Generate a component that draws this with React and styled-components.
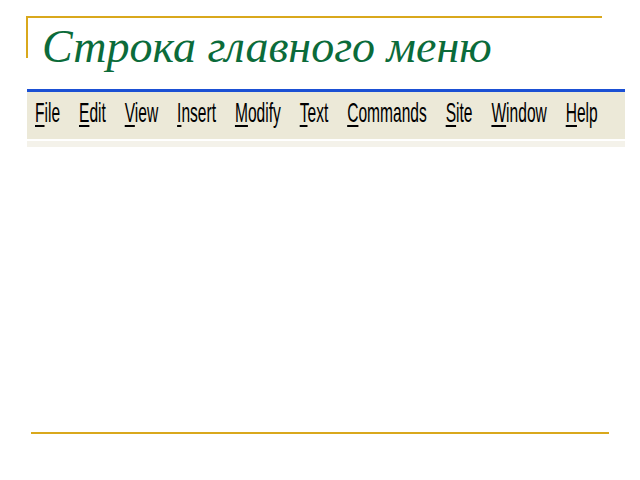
import React from 'react';
import styled, { createGlobalStyle } from 'styled-components';

const GlobalStyle = createGlobalStyle`
  html, body {
    margin: 0;
    padding: 0;
    background: #ffffff;
  }
  body {
    font-family: "Liberation Sans", Arial, sans-serif;
  }
`;

const Slide = styled.div`
  width: 640px;
  height: 480px;
  display: flex;
  flex-direction: column;
  overflow: hidden;
`;

const HeaderFrame = styled.div`
  box-sizing: border-box;
  margin: 16px 0 0 26px;
  width: 576px;
  height: 42px;
  border-top: 2px solid #d9a81c;
  border-left: 2px solid #d9a81c;
  padding: 6px 0 0 14px;
`;

const Title = styled.h1`
  margin: 0;
  font-family: "Liberation Serif", "Times New Roman", serif;
  font-style: italic;
  font-weight: normal;
  font-size: 46px;
  line-height: 46px;
  color: #0b6b3a;
  white-space: nowrap;
`;

const MenuShot = styled.div`
  margin: 31px 0 0 27px;
  width: 598px;
  display: flex;
  flex-direction: column;
`;

const MenuBar = styled.div`
  box-sizing: border-box;
  height: 50px;
  border-top: 3px solid #1b50d4;
  background: #ece9d8;
  padding: 7px 0 0 8px;
  overflow: hidden;
`;

const MenuItems = styled.div`
  display: flex;
  gap: 34px;
  width: max-content;
  transform: scaleX(0.556);
  transform-origin: left top;
`;

const MenuItem = styled.span`
  font-family: "Liberation Sans", Arial, sans-serif;
  font-size: 28px;
  line-height: 28px;
  color: #000000;
  white-space: nowrap;
`;

const Accel = styled.span`
  text-decoration: underline;
  text-decoration-thickness: 2px;
  text-underline-offset: 3px;
`;

const Strip = styled.div`
  margin-top: 2px;
  height: 6px;
  background: #f4f2ea;
`;

const FooterRule = styled.div`
  margin: 285px 0 0 31px;
  width: 578px;
  height: 2px;
  background: #d9a81c;
`;

const items = ['File', 'Edit', 'View', 'Insert', 'Modify', 'Text', 'Commands', 'Site', 'Window', 'Help'];

export default function App() {
  return (
    <>
      <GlobalStyle />
      <Slide>
        <HeaderFrame>
          <Title>Строка главного меню</Title>
        </HeaderFrame>
        <MenuShot>
          <MenuBar>
            <MenuItems>
              {items.map(name => (
                <MenuItem key={name}>
                  <Accel>{name[0]}</Accel>
                  {name.slice(1)}
                </MenuItem>
              ))}
            </MenuItems>
          </MenuBar>
          <Strip />
        </MenuShot>
        <FooterRule />
      </Slide>
    </>
  );
}
